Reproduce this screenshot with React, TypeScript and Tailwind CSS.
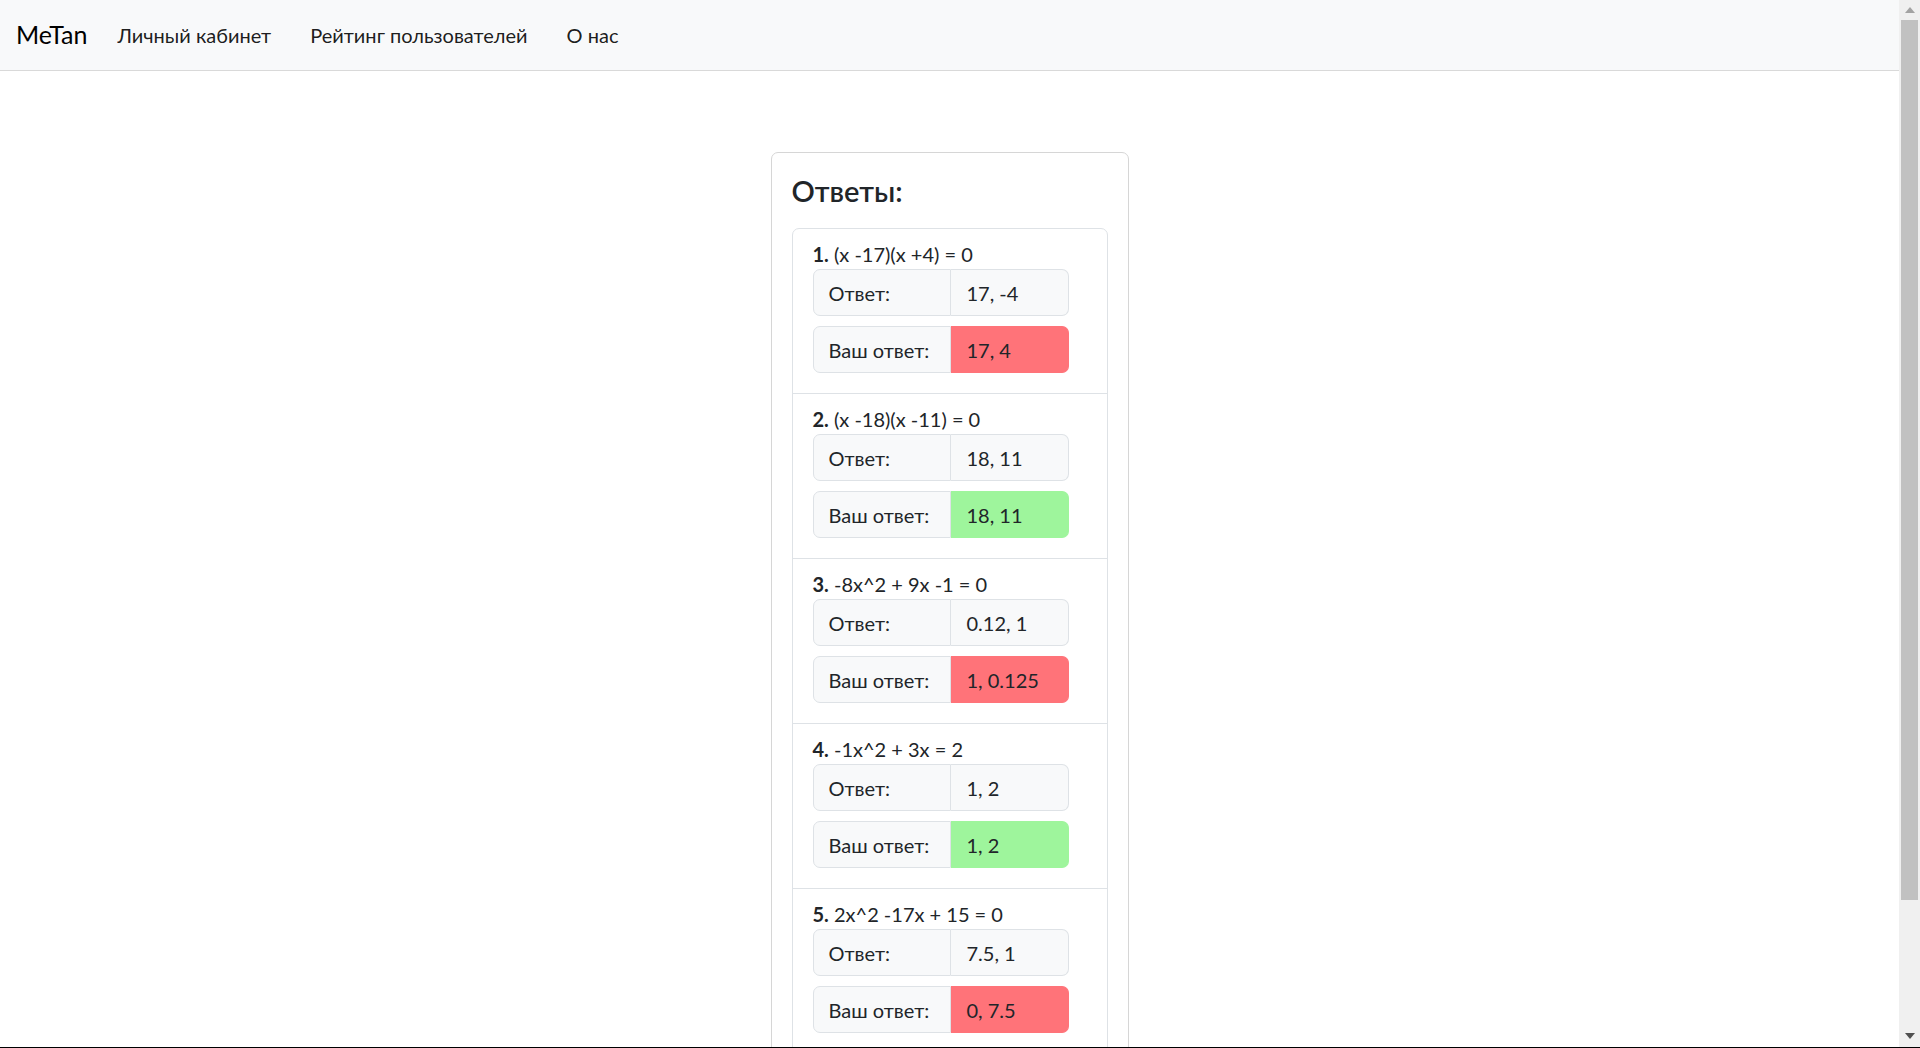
import React from 'react';

interface Task {
  expr: string;
  answer: string;
  user: string;
  ok: boolean;
}

const TASKS: Task[] = [
  { expr: '(x -17)(x +4) = 0', answer: '17, -4', user: '17, 4', ok: false },
  { expr: '(x -18)(x -11) = 0', answer: '18, 11', user: '18, 11', ok: true },
  { expr: '-8x^2 + 9x -1 = 0', answer: '0.12, 1', user: '1, 0.125', ok: false },
  { expr: '-1x^2 + 3x = 2', answer: '1, 2', user: '1, 2', ok: true },
  { expr: '2x^2 -17x + 15 = 0', answer: '7.5, 1', user: '0, 7.5', ok: false },
];

const Field: React.FC<{ label: string; value: string; tone?: 'bad' | 'good' }> = ({ label, value, tone }) => {
  const valueCls =
    tone === 'bad'
      ? 'bg-[#ff7379] border-[#ff7379]'
      : tone === 'good'
      ? 'bg-[#9ef59c] border-[#9ef59c]'
      : 'bg-[#f8f9fa] border-[#dee2e6]';
  return (
    <div className="flex w-[256px] h-[47px] mb-[10px]">
      <div className="w-[138px] flex items-center px-[15px] bg-[#f8f9fa] border border-[#dee2e6] rounded-l-[7px]">
        {label}
      </div>
      <div className={`w-[118px] flex items-center px-[16px] border-y border-r rounded-r-[7px] ${valueCls}`}>
        {value}
      </div>
    </div>
  );
};

// window scrollbar as it appears in the screenshot
const Scrollbar = () => (
  <div className="w-[21px] shrink-0 bg-[#f0f0f0] flex flex-col items-center">
    <div className="h-[20px] flex items-center justify-center">
      <svg width="10" height="6" viewBox="0 0 10 6">
        <path d="M0 6 L5 0 L10 6 Z" fill="#a3a3a3" />
      </svg>
    </div>
    <div className="w-[17px] h-[880px] bg-[#c1c1c1]" />
    <div className="flex-1" />
    <div className="h-[22px] flex items-center justify-center">
      <svg width="10" height="6" viewBox="0 0 10 6">
        <path d="M0 0 L10 0 L5 6 Z" fill="#505050" />
      </svg>
    </div>
  </div>
);

export default function App() {
  return (
    <div
      className="h-screen flex flex-col overflow-hidden bg-white text-[#212529] text-[20px] leading-[1.5]"
      style={{ fontFamily: '"Segoe UI", Lato, "Noto Sans", sans-serif' }}
    >
      <div className="flex flex-1 min-h-0">
        <div className="flex-1 min-w-0 overflow-hidden">
          <nav className="h-[71px] bg-[#f8f9fa] border-b border-[#d9d9d9] flex items-center pl-[16px]">
            <span className="text-[25px] text-black mr-[30px]">MeTan</span>
            <a className="text-black/90 mr-[39px]">Личный кабинет</a>
            <a className="text-black/90 mr-[39px]">Рейтинг пользователей</a>
            <a className="text-black/90">О нас</a>
          </nav>

          <main className="flex justify-center pt-[81px] pb-[60px]">
            <div className="w-[358px] border border-[#d6d6d6] rounded-[7px] p-[20px]">
              <h3 className="text-[29px] font-semibold leading-[35px] mb-[20px]">Ответы:</h3>
              <ul className="border border-[#dee2e6] rounded-[7px]">
                {TASKS.map((t, i) => (
                  <li
                    key={i}
                    className={`px-[20px] pt-[10px] pb-[10px] ${i > 0 ? 'border-t border-[#dee2e6]' : ''}`}
                  >
                    <div>
                      <b className="font-bold">{i + 1}.</b> {t.expr}
                    </div>
                    <Field label="Ответ:" value={t.answer} />
                    <Field label="Ваш ответ:" value={t.user} tone={t.ok ? 'good' : 'bad'} />
                  </li>
                ))}
              </ul>
            </div>
          </main>
        </div>
        <Scrollbar />
      </div>
      <div className="h-px shrink-0 bg-black" />
    </div>
  );
}
